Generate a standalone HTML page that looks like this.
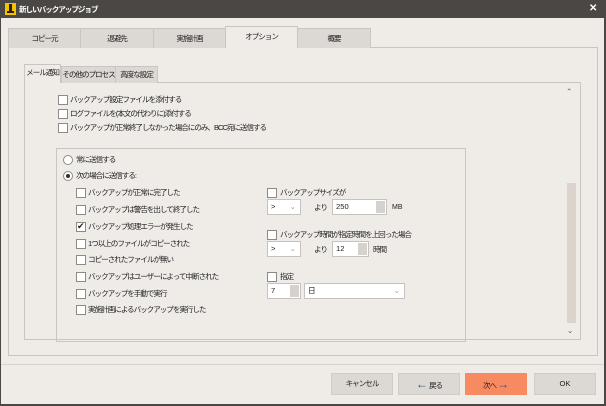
<!DOCTYPE html>
<html><head><meta charset="utf-8"><style>
*{box-sizing:border-box;margin:0;padding:0}
body{width:606px;height:406px;background:#4a4744;font-family:"Liberation Sans","Noto Sans CJK JP",sans-serif;font-size:7.6px;letter-spacing:-1.05px;color:#222;position:relative;overflow:hidden}
.a{position:absolute}
#win{left:1px;top:18px;width:603px;height:386px;background:#efece8}
.tab{position:absolute;top:28px;height:20px;background:#dcd8d3;border:1px solid #c9c5c0;border-bottom:none;text-align:center;line-height:19px;white-space:nowrap}
.stab{position:absolute;top:66px;height:17px;background:#dcd8d3;border:1px solid #c9c5c0;border-bottom:none;text-align:center;line-height:16px;white-space:nowrap}
.cb{position:absolute;width:10px;height:10px;border:1px solid #8d8a86;background:#fff}
.t{position:absolute;white-space:nowrap;line-height:11px}
.rb{position:absolute;width:10px;height:10px;border:1px solid #8d8a86;border-radius:50%;background:#fff}
.inp{position:absolute;height:16px;border:1px solid #c6c2bd;background:#fff;line-height:14px;padding-left:3px;white-space:nowrap;letter-spacing:0}
.spin{position:absolute;top:1px;right:1px;width:9px;height:12px;background:#d5d1cc}
.dd{position:absolute;right:4px;top:0;color:#999}
.btn{position:absolute;top:373px;height:22px;width:62px;background:#dcd8d3;border:1px solid #cfcbc6;text-align:center;line-height:20px;white-space:nowrap}
</style></head><body>
<div class="a" style="left:5px;top:3px;width:11px;height:12px;background:#f3c300"><div class="a" style="left:4px;top:1px;width:3px;height:8px;background:#222"></div><div class="a" style="left:2px;top:8px;width:7px;height:2px;background:#222"></div></div>
<div class="t" style="left:19px;top:4px;color:#fff;font-weight:bold">新しいバックアップジョブ</div>
<div class="t" style="left:589px;top:3px;color:#fff;font-size:10px;font-weight:bold">✕</div>
<div id="win" class="a"></div>
<div class="a" style="left:8px;top:47px;width:590px;height:309px;border:1px solid #c9c5c0;background:#efece8"></div>
<div class="tab" style="left:8px;width:73px">コピー元</div>
<div class="tab" style="left:80px;width:74px">退避先</div>
<div class="tab" style="left:153px;width:73px">実施計画</div>
<div class="tab" style="left:225px;top:26px;height:22px;width:73px;background:#efece8">オプション</div>
<div class="tab" style="left:297px;width:74px">概要</div>
<div class="a" style="left:24px;top:82px;width:557px;height:258px;border:1px solid #c9c5c0;background:#efece8"></div>
<div class="stab" style="left:24px;top:64px;height:19px;width:37px;background:#efece8">メール通知</div>
<div class="stab" style="left:61px;width:55px">その他のプロセス</div>
<div class="stab" style="left:115px;width:43px">高度な設定</div>
<div class="t" style="left:566px;top:86px;color:#555">⌃</div>
<div class="a" style="left:567px;top:183px;width:9px;height:140px;background:#dcd4cc"></div>
<div class="t" style="left:567px;top:325px;color:#555">⌄</div>

<div class="cb" style="left:58px;top:95px"></div><div class="t" style="left:70px;top:94px">バックアップ設定ファイルを添付する</div>
<div class="cb" style="left:58px;top:109px"></div><div class="t" style="left:70px;top:108px">ログファイルを(本文の代わりに)添付する</div>
<div class="cb" style="left:58px;top:123px"></div><div class="t" style="left:70px;top:122px">バックアップが正常終了しなかった場合にのみ、BCC宛に送信する</div>

<div class="a" style="left:56px;top:148px;width:410px;height:194px;border:1px solid #c9c5c0"></div>
<div class="rb" style="left:63px;top:155px"></div><div class="t" style="left:76px;top:154px">常に送信する</div>
<div class="rb" style="left:63px;top:171px"><div class="a" style="left:2px;top:2px;width:4px;height:4px;border-radius:50%;background:#333"></div></div><div class="t" style="left:76px;top:170px">次の場合に送信する:</div>

<div class="cb" style="left:76px;top:188px"></div><div class="t" style="left:88px;top:187px">バックアップが正常に完了した</div>
<div class="cb" style="left:76px;top:205px"></div><div class="t" style="left:88px;top:204px">バックアップは警告を出して終了した</div>
<div class="cb" style="left:76px;top:222px"><div class="t" style="left:0px;top:-2px;font-size:9px;letter-spacing:0">✔</div></div><div class="t" style="left:88px;top:221px">バックアップ処理エラーが発生した</div>
<div class="cb" style="left:76px;top:239px"></div><div class="t" style="left:88px;top:238px">1つ以上のファイルがコピーされた</div>
<div class="cb" style="left:76px;top:255px"></div><div class="t" style="left:88px;top:254px">コピーされたファイルが無い</div>
<div class="cb" style="left:76px;top:272px"></div><div class="t" style="left:88px;top:271px">バックアップはユーザーによって中断された</div>
<div class="cb" style="left:76px;top:289px"></div><div class="t" style="left:88px;top:288px">バックアップを手動で実行</div>
<div class="cb" style="left:76px;top:305px"></div><div class="t" style="left:88px;top:304px">実施計画によるバックアップを実行した</div>

<div class="cb" style="left:267px;top:188px"></div><div class="t" style="left:280px;top:187px">バックアップサイズが</div>
<div class="inp" style="left:267px;top:199px;width:34px">&gt;<span class="dd">⌄</span></div>
<div class="t" style="left:314px;top:202px">より</div>
<div class="inp" style="left:332px;top:199px;width:55px">250<div class="spin"></div></div>
<div class="t" style="left:392px;top:202px;font-size:7px;letter-spacing:0">MB</div>
<div class="cb" style="left:267px;top:230px"></div><div class="t" style="left:280px;top:229px">バックアップ時間が指定時間を上回った場合</div>
<div class="inp" style="left:267px;top:241px;width:34px">&gt;<span class="dd">⌄</span></div>
<div class="t" style="left:314px;top:244px">より</div>
<div class="inp" style="left:332px;top:241px;width:37px">12<div class="spin"></div></div>
<div class="t" style="left:373px;top:244px">時間</div>
<div class="cb" style="left:267px;top:272px"></div><div class="t" style="left:280px;top:271px">指定</div>
<div class="inp" style="left:267px;top:283px;width:34px">7<div class="spin"></div></div>
<div class="inp" style="left:304px;top:283px;width:101px">日<span class="dd">⌄</span></div>

<div class="a" style="left:1px;top:364px;width:603px;height:1px;background:#d6d2cd"></div>
<div class="btn" style="left:331px">キャンセル</div>
<div class="btn" style="left:398px"><span style="color:#2a4f8f;font-weight:bold;font-size:12px;letter-spacing:0">←</span> 戻る</div>
<div class="btn" style="left:465px;background:#f88a62;border-color:#f88a62">次へ <span style="color:#2a4f8f;font-weight:bold;font-size:12px;letter-spacing:0">→</span></div>
<div class="btn" style="left:534px;letter-spacing:0">OK</div>
</body></html>
